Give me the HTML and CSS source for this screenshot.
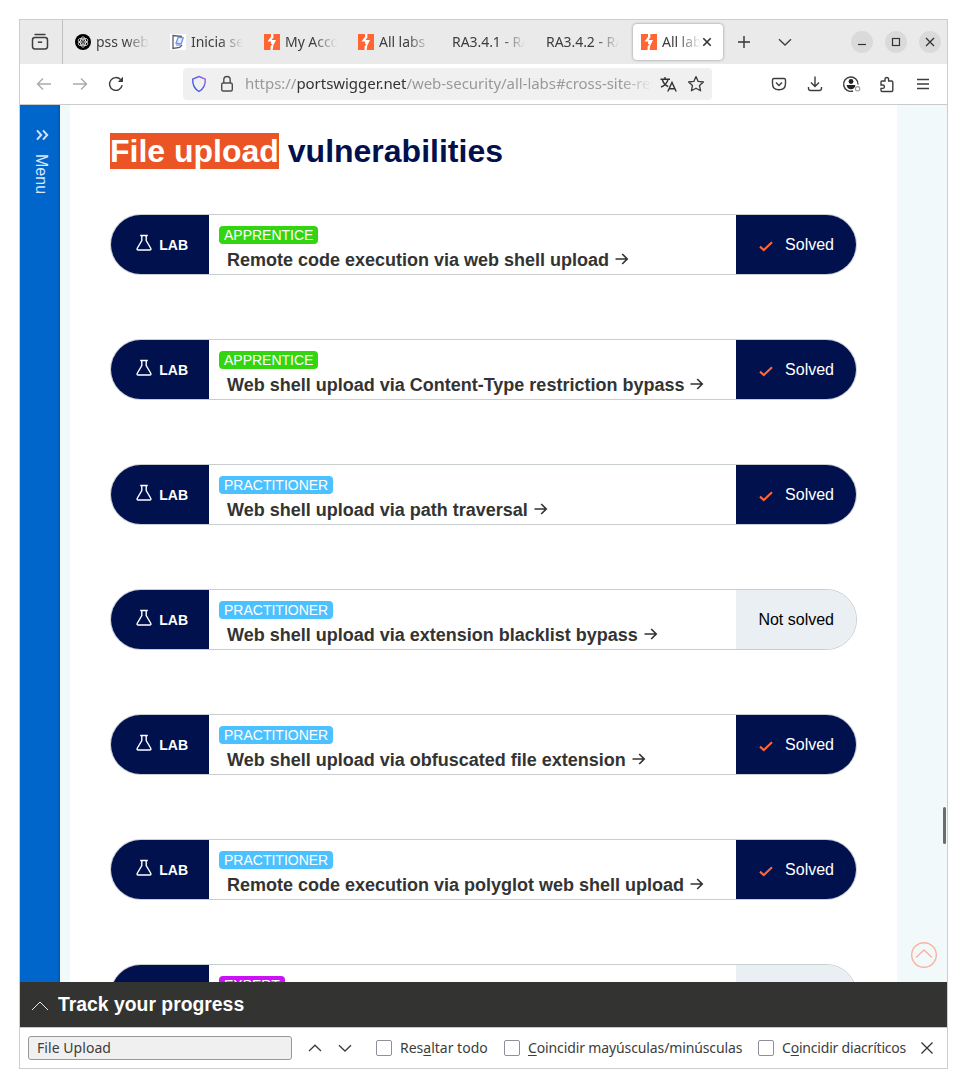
FILE: index.html
```html
<!DOCTYPE html>
<html lang="es">
<head>
<meta charset="utf-8">
<title>All labs</title>
<link rel="stylesheet" href="styles.css">
</head>
<body>
<svg class="defs" width="0" height="0">
  <symbol id="bolt" viewBox="0 0 16 16"><rect width="16" height="16" fill="#ff6633"/><path d="M7 0H9.4V3.6L7.6 6.1H12L9.4 11.2L8.6 16H6.6V12.6L8.4 9.9H7.6V7.6H3.6L7 2.8Z" fill="#fff"/><path d="M7.6 6.1H9.4L8.4 9.9H6.9Z" fill="#fff"/></symbol>
  <symbol id="flask" viewBox="0 0 16 18"><path d="M4.2 1.5H11.8M5.8 1.5V6.6L1.3 14.2Q.5 16 2.3 16H13.7Q15.5 16 14.7 14.2L10.2 6.6V1.5" fill="none" stroke="#fff" stroke-width="1.4"/></symbol>
  <symbol id="arrow" viewBox="0 0 14 14"><path d="M.5 7H12M7.2 2L12.2 7L7.2 12" fill="none" stroke="#333332" stroke-width="1.7"/></symbol>
  <symbol id="check" viewBox="0 0 16 14"><path d="M2 7.6L5.8 11L14 3.2" fill="none" stroke="#ff6633" stroke-width="2.1"/></symbol>
  <symbol id="up" viewBox="0 0 14 14"><path d="M1 10L7 4.2L13 10" fill="none" stroke="currentColor" stroke-width="1.3"/></symbol>
  <symbol id="down" viewBox="0 0 14 14"><path d="M1 4.2L7 10L13 4.2" fill="none" stroke="currentColor" stroke-width="1.3"/></symbol>
</svg>
<div class="window">
  <header class="tabbar">
    <div class="firefox-view">
      <svg width="18" height="18" viewBox="0 0 18 18" fill="none" stroke="#3d3d3d" stroke-width="1.5"><path d="M3.5 1.5H14.5"/><path d="M1.5 7Q1.5 4.6 3.9 4.6H14.1Q16.5 4.6 16.5 7V13.6Q16.5 16 14.1 16H3.9Q1.5 16 1.5 13.6Z"/><path d="M6.8 9.2H11.2"/></svg>
    </div>
    <nav class="tabs">
      <div class="tab"><svg class="favicon" viewBox="0 0 16 16"><circle cx="8" cy="8" r="8" fill="#000"/><g fill="none" stroke="#fff" stroke-width=".75"><ellipse cx="8" cy="8" rx="2.7" ry="5.2"/><ellipse cx="8" cy="8" rx="2.7" ry="5.2" transform="rotate(60 8 8)"/><ellipse cx="8" cy="8" rx="2.7" ry="5.2" transform="rotate(120 8 8)"/><circle cx="8" cy="8" r="1.4"/></g></svg><span class="tab-label">pss web</span></div>
      <div class="tab"><svg class="favicon" viewBox="0 0 16 16"><rect width="16" height="16" fill="#fff"/><path d="M12 2.5L3 1.5V14.5L9.5 13.5L12 11" fill="none" stroke="#555c6c" stroke-width="1.3"/><path d="M8.2 3.2L13.2 3.8L11.2 9.8L6 9.2Z" fill="#e7efff" stroke="#6b92ea" stroke-width="1.3"/><path d="M6 11H10.6" fill="none" stroke="#6b92ea" stroke-width="1.2"/></svg><span class="tab-label">Inicia ses</span></div>
      <div class="tab"><svg class="favicon"><use href="#bolt"/></svg><span class="tab-label">My Account</span></div>
      <div class="tab"><svg class="favicon"><use href="#bolt"/></svg><span class="tab-label">All labs |</span></div>
      <div class="tab"><span class="tab-label">RA3.4.1 - RA</span></div>
      <div class="tab"><span class="tab-label">RA3.4.2 - RA</span></div>
      <div class="tab active"><svg class="favicon"><use href="#bolt"/></svg><span class="tab-label">All labs</span><svg class="tab-close" width="10" height="10" viewBox="0 0 10 10"><path d="M1.3 1.3L8.7 8.7M8.7 1.3L1.3 8.7" stroke="#333" stroke-width="1.6"/></svg></div>
    </nav>
    <div class="tab-tool"><svg width="14" height="14" viewBox="0 0 14 14"><path d="M7 1V13M1 7H13" stroke="#333" stroke-width="1.4"/></svg></div>
    <div class="tab-tool"><svg width="14" height="14"><use href="#down"/></svg></div>
    <div class="controls">
      <span class="control"><svg width="12" height="12" viewBox="0 0 12 12"><path d="M2 8.5H10" stroke="#333" stroke-width="1.2"/></svg></span>
      <span class="control"><svg width="12" height="12" viewBox="0 0 12 12"><rect x="2.5" y="2.5" width="7" height="7" fill="none" stroke="#333" stroke-width="1.2"/></svg></span>
      <span class="control"><svg width="12" height="12" viewBox="0 0 12 12"><path d="M2 2L10 10M10 2L2 10" stroke="#333" stroke-width="1.3"/></svg></span>
    </div>
  </header>

  <div class="toolbar">
    <div class="tools tools-left">
      <span class="tool muted"><svg width="16" height="14" viewBox="0 0 16 14"><path d="M15 7H1.5M7 1.5L1.5 7L7 12.5"/></svg></span>
      <span class="tool muted"><svg width="16" height="14" viewBox="0 0 16 14"><path d="M1 7H14.5M9 1.5L14.5 7L9 12.5"/></svg></span>
      <span class="tool"><svg width="16" height="16" viewBox="0 0 16 16"><path d="M14.2 9.2A6.4 6.4 0 1 1 12.6 3.6"/><path d="M15 .8V6H9.8Z" fill="#3d3d3d" stroke="none"/></svg></span>
    </div>
    <div class="urlbar">
      <svg class="shield" width="16" height="18" viewBox="0 0 16 18"><defs><linearGradient id="sg" x1="0" y1="1" x2="1" y2="0"><stop offset="0" stop-color="#2357e0"/><stop offset="1" stop-color="#9464f0"/></linearGradient></defs><path d="M8 1.5L14.3 4.2Q14.7 12.5 8 16.5Q1.3 12.5 1.7 4.2Z" fill="none" stroke="url(#sg)" stroke-width="1.4" stroke-linejoin="round"/></svg>
      <svg class="lock" width="14" height="18" viewBox="0 0 14 18" fill="none" stroke="#4d4d4d" stroke-width="1.4"><rect x="1.7" y="8" width="10.6" height="8" rx="1.5"/><path d="M3.8 8V4.8Q3.8 1.5 7 1.5T10.2 4.8V8"/></svg>
      <span class="url">https://<b>portswigger.net</b>/web-security/all-labs#cross-site-request</span>
      <svg class="translate" width="17" height="17" viewBox="0 0 17 17" fill="none" stroke="#333" stroke-width="1.4"><path d="M.5 3.2H10M5 1V3.2M2.3 3.5Q3.5 8.5 8.2 10.5M8 3.5Q6.5 9 1 11"/><path d="M7.8 15.5L12 6.5L16.2 15.5M9.3 12.8H14.7"/></svg>
      <svg class="star" width="18" height="18" viewBox="0 0 18 18" fill="none" stroke="#3d3d3d" stroke-width="1.3" stroke-linejoin="round"><path d="M9 1.6L11.2 6.4L16.4 7L12.5 10.5L13.6 15.8L9 13.2L4.4 15.8L5.5 10.5L1.6 7L6.8 6.4Z"/></svg>
    </div>
    <div class="tools tools-right">
      <span class="tool"><svg width="16" height="16" viewBox="0 0 16 16"><path d="M3 2.5H13Q14.5 2.5 14.5 4V7.5Q14.5 13.8 8 13.8T1.5 7.5V4Q1.5 2.5 3 2.5Z"/><path d="M5 6.5L8 9.5L11 6.5"/></svg></span>
      <span class="tool"><svg width="16" height="16" viewBox="0 0 16 16"><path d="M8 .5V10.5M4 6.5L8 10.5L12 6.5M1.5 11V12.3Q1.5 14.5 3.7 14.5H12.3Q14.5 14.5 14.5 12.3V11"/></svg></span>
      <span class="tool"><svg width="19" height="18" viewBox="0 0 19 18"><path d="M16 9.5A7.2 7.2 0 1 0 11 16"/><circle cx="9" cy="6.5" r="2.4" fill="#222" stroke="none"/><path d="M4.6 10H13.4Q12.6 14.3 9 14.3T4.6 10Z" fill="#222" stroke="none"/><circle cx="15.6" cy="13.8" r="2.2" stroke="#999" stroke-width="1.1"/></svg></span>
      <span class="tool"><svg width="16" height="17" viewBox="0 0 16 17"><path d="M2 9V6Q2 5 3 5H6V3.6Q6 1.5 7.8 1.5T9.6 3.6V5H12.6Q13.8 5 13.8 6.2V14.3Q13.8 15.5 12.6 15.5H3.2Q2 15.5 2 14.3V12.4H3.8Q5.4 12.4 5.4 10.7T3.8 9Z"/></svg></span>
      <span class="tool"><svg width="14" height="12" viewBox="0 0 14 12"><path d="M1 1.5H13M1 6H13M1 10.5H13"/></svg></span>
    </div>
  </div>

  <div class="viewport">
    <aside class="side-menu">
      <svg width="14" height="12" viewBox="0 0 14 12"><path d="M2 1.3L6.2 6L2 10.7M8 1.3L12.2 6L8 10.7" fill="none" stroke="#d3e2f6" stroke-width="2"/></svg>
      <span class="side-label">Menu</span>
    </aside>
    <main class="page">
      <h2 class="heading"><mark>File upload</mark> vulnerabilities</h2>
      <div class="labs">
        <div class="lab"><div class="lab-tag"><svg class="flask"><use href="#flask"/></svg>LAB</div><div class="lab-body"><span class="level apprentice">APPRENTICE</span><a class="lab-title">Remote code execution via web shell upload<svg class="arrow"><use href="#arrow"/></svg></a></div><div class="status solved"><svg class="check"><use href="#check"/></svg>Solved</div></div>
        <div class="lab"><div class="lab-tag"><svg class="flask"><use href="#flask"/></svg>LAB</div><div class="lab-body"><span class="level apprentice">APPRENTICE</span><a class="lab-title">Web shell upload via Content-Type restriction bypass<svg class="arrow"><use href="#arrow"/></svg></a></div><div class="status solved"><svg class="check"><use href="#check"/></svg>Solved</div></div>
        <div class="lab"><div class="lab-tag"><svg class="flask"><use href="#flask"/></svg>LAB</div><div class="lab-body"><span class="level practitioner">PRACTITIONER</span><a class="lab-title">Web shell upload via path traversal<svg class="arrow"><use href="#arrow"/></svg></a></div><div class="status solved"><svg class="check"><use href="#check"/></svg>Solved</div></div>
        <div class="lab"><div class="lab-tag"><svg class="flask"><use href="#flask"/></svg>LAB</div><div class="lab-body"><span class="level practitioner">PRACTITIONER</span><a class="lab-title">Web shell upload via extension blacklist bypass<svg class="arrow"><use href="#arrow"/></svg></a></div><div class="status">Not solved</div></div>
        <div class="lab"><div class="lab-tag"><svg class="flask"><use href="#flask"/></svg>LAB</div><div class="lab-body"><span class="level practitioner">PRACTITIONER</span><a class="lab-title">Web shell upload via obfuscated file extension<svg class="arrow"><use href="#arrow"/></svg></a></div><div class="status solved"><svg class="check"><use href="#check"/></svg>Solved</div></div>
        <div class="lab"><div class="lab-tag"><svg class="flask"><use href="#flask"/></svg>LAB</div><div class="lab-body"><span class="level practitioner">PRACTITIONER</span><a class="lab-title">Remote code execution via polyglot web shell upload<svg class="arrow"><use href="#arrow"/></svg></a></div><div class="status solved"><svg class="check"><use href="#check"/></svg>Solved</div></div>
        <div class="lab"><div class="lab-tag"></div><div class="lab-body"><span class="level expert">EXPERT</span></div><div class="status"></div></div>
      </div>
    </main>
    <div class="scroll-thumb"></div>
    <svg class="to-top" viewBox="0 0 26 26"><circle cx="13" cy="13" r="12.3"/><path d="M5 15.5L13 8L21 15.5"/></svg>
  </div>

  <div class="progress"><svg width="18" height="10" viewBox="0 0 18 10"><path d="M1 9L9 1L17 9" fill="none" stroke="#e8e8e8" stroke-width="1"/></svg>Track your progress</div>

  <footer class="findbar">
    <div class="find-input">File Upload</div>
    <svg class="find-prev" width="14" height="14"><use href="#up"/></svg>
    <svg class="find-next" width="14" height="14"><use href="#down"/></svg>
    <label class="option opt-1"><i class="box"></i><span>Res<u>a</u>ltar todo</span></label>
    <label class="option opt-2"><i class="box"></i><span><u>C</u>oincidir mayúsculas/minúsculas</span></label>
    <label class="option opt-3"><i class="box"></i><span>C<u>o</u>incidir diacríticos</span></label>
    <svg class="find-close" width="14" height="14" viewBox="0 0 14 14"><path d="M1.5 1.5L12.5 12.5M12.5 1.5L1.5 12.5" stroke="#333" stroke-width="1.3"/></svg>
  </footer>
</div>
</body>
</html>
```
FILE: styles.css
```css
* { box-sizing: border-box; }
body { margin: 0; padding: 19px; background: #fff; font-family: "Liberation Sans", Arial, sans-serif; }
svg { display: block; flex: none; }
.defs { position: absolute; }

.window { width: 929px; height: 1050px; border: 1px solid #cdcdcd; display: flex; flex-direction: column; background: #fff; }
.tabbar, .toolbar, .findbar { font-family: "Noto Sans", "Open Sans", sans-serif; font-size: 14px; color: #3d3d3d; }

/* Tab strip */
.tabbar { height: 44px; flex: none; background: #eaeaea; display: flex; align-items: center; }
.firefox-view { width: 43px; height: 44px; border-right: 1px solid #c1c1c1; display: flex; align-items: center; justify-content: center; padding-right: 2px; }
.tabs { display: flex; margin-left: 4px; }
.tab { width: 94px; height: 36px; padding: 0 12px 0 9px; display: flex; align-items: center; gap: 5px; }
.tab:first-child { padding-left: 8px; }
.favicon { width: 16px; height: 16px; }
.tab-label { flex: 1; min-width: 0; margin-top: -1px; overflow: hidden; white-space: nowrap; letter-spacing: -.05px; -webkit-mask-image: linear-gradient(to left, transparent, #000 24px); mask-image: linear-gradient(to left, transparent, #000 24px); }
.tab.active { width: 90px; margin-left: 2px; padding: 0 11px 0 8px; background: #fff; border-radius: 4px; box-shadow: 0 0 3px rgba(0, 0, 0, .4); gap: 1px; }
.active .tab-label { padding-left: 4px; }
.tab-tool { width: 40px; display: flex; justify-content: center; margin-left: 1px; }
.controls { margin-left: auto; margin-right: 6px; display: flex; gap: 12px; }
.control { width: 22px; height: 22px; border-radius: 50%; background: #dadada; display: flex; align-items: center; justify-content: center; }

/* Navigation toolbar */
.toolbar { height: 41px; flex: none; border-bottom: 1px solid #cbcbcb; display: flex; align-items: center; background: #fff; }
.tools { display: flex; }
.tools-left { margin-left: 6px; }
.tool { width: 36px; height: 32px; display: flex; align-items: center; justify-content: center; }
.tool svg { fill: none; stroke: #3d3d3d; stroke-width: 1.4; }
.tool.muted svg { stroke: #aaa; }
.urlbar { width: 529px; height: 32px; margin-left: 49px; padding: 0 7px 0 8px; border-radius: 4px; background: #f0f0f0; display: flex; align-items: center; }
.lock { margin-left: 13px; }
.url { margin: -2px 0 0 11px; width: 408px; overflow: hidden; white-space: nowrap; font-size: 15px; letter-spacing: -.04px; color: #999; -webkit-mask-image: linear-gradient(to left, transparent, #000 32px); mask-image: linear-gradient(to left, transparent, #000 32px); }
.url b { font-weight: 400; color: #333; }
.translate { margin-left: 7px; }
.star { margin-left: 10px; }
.tools-right { margin-left: auto; margin-right: 6px; }

/* Web page */
.viewport { position: relative; height: 877px; flex: none; overflow: hidden; display: flex; background: #f1f9fb; }
.side-menu { width: 40px; flex: none; background: linear-gradient(to right, #0066cc 37px, #0058b0 40px); display: flex; flex-direction: column; align-items: center; padding: 24px 0 0 4px; gap: 13px; }
.side-label { writing-mode: vertical-rl; margin-right: 3px; font-size: 16px; line-height: 18px; color: #d9e8f8; }
.page { width: 827px; margin-left: 10px; padding: 28px 40px 0; background: #fff; }
.heading { margin: 0; font-size: 32px; line-height: 36px; color: #00114e; }
.heading mark { background: #eb5424; color: #fff; }
.labs { display: flex; flex-direction: column; gap: 64px; margin-top: 45px; }
.lab { height: 61px; flex: none; border: 1px solid #c8cdcf; border-radius: 31px; overflow: hidden; display: flex; }
.lab-tag { width: 98px; background: #00114e; color: #fff; font-size: 14px; font-weight: 700; display: flex; align-items: center; justify-content: flex-end; gap: 7px; padding: 0 21px 0 0; }
.flask { width: 16px; height: 18px; margin-top: -3px; }
.lab-body { flex: 1; padding: 11px 0 0 10px; display: flex; flex-direction: column; align-items: flex-start; }
.level { height: 18px; padding: 0 5px; border-radius: 4px; color: #fff; font-size: 14px; line-height: 18px; }
.apprentice { background: #33d510; }
.practitioner { background: #4cc1ff; }
.expert { background: #cc11f7; }
.lab-title { margin: 6px 0 0 8px; font-size: 18px; line-height: 21px; font-weight: 700; color: #333332; display: flex; align-items: center; gap: 6px; }
.arrow { width: 14px; height: 14px; margin-top: -3px; }
.status { width: 120px; padding-right: 22px; background: #e9eff2; color: #000; font-size: 16px; display: flex; align-items: center; justify-content: flex-end; }
.status.solved { background: #00114e; color: #fff; gap: 11px; }
.check { width: 16px; height: 14px; margin-top: 2px; }
.scroll-thumb { position: absolute; right: 1px; top: 702px; width: 3px; height: 37px; border-radius: 2px; background: #6c6c6c; }
.to-top { position: absolute; left: 891px; top: 837px; width: 26px; height: 26px; fill: none; stroke: #fcb19d; stroke-width: 1.4; }

.progress { height: 45px; flex: none; background: #333332; color: #fff; font-size: 19.36px; font-weight: 700; display: flex; align-items: center; gap: 9px; padding: 0 0 0 11px; }
.progress svg { margin-top: 2px; }

/* Find bar */
.findbar { height: 41px; flex: none; border-top: 1px solid #c8c8c8; display: flex; align-items: center; padding: 0 13px 0 8px; }
.find-input { width: 264px; height: 24px; border: 1px solid #999; border-radius: 3px; background: #f0f0f0; padding: 0 8px; line-height: 22px; letter-spacing: .05px; }
.find-prev { margin-left: 16px; }
.find-next { margin-left: 16px; }
.option { flex: none; display: flex; align-items: center; gap: 8px; white-space: nowrap; }
.option span { margin-top: -1px; }
.box { width: 16px; height: 16px; flex: none; border: 1px solid #8f8f9d; border-radius: 2px; background: #fff; }
.option u { text-underline-offset: 2px; }
.opt-1 { margin-left: 24px; width: 128px; }
.opt-2 { width: 254px; letter-spacing: -.12px; }
.opt-3 { width: 149px; letter-spacing: -.2px; overflow: hidden; }
.find-close { margin-left: auto; }
```
